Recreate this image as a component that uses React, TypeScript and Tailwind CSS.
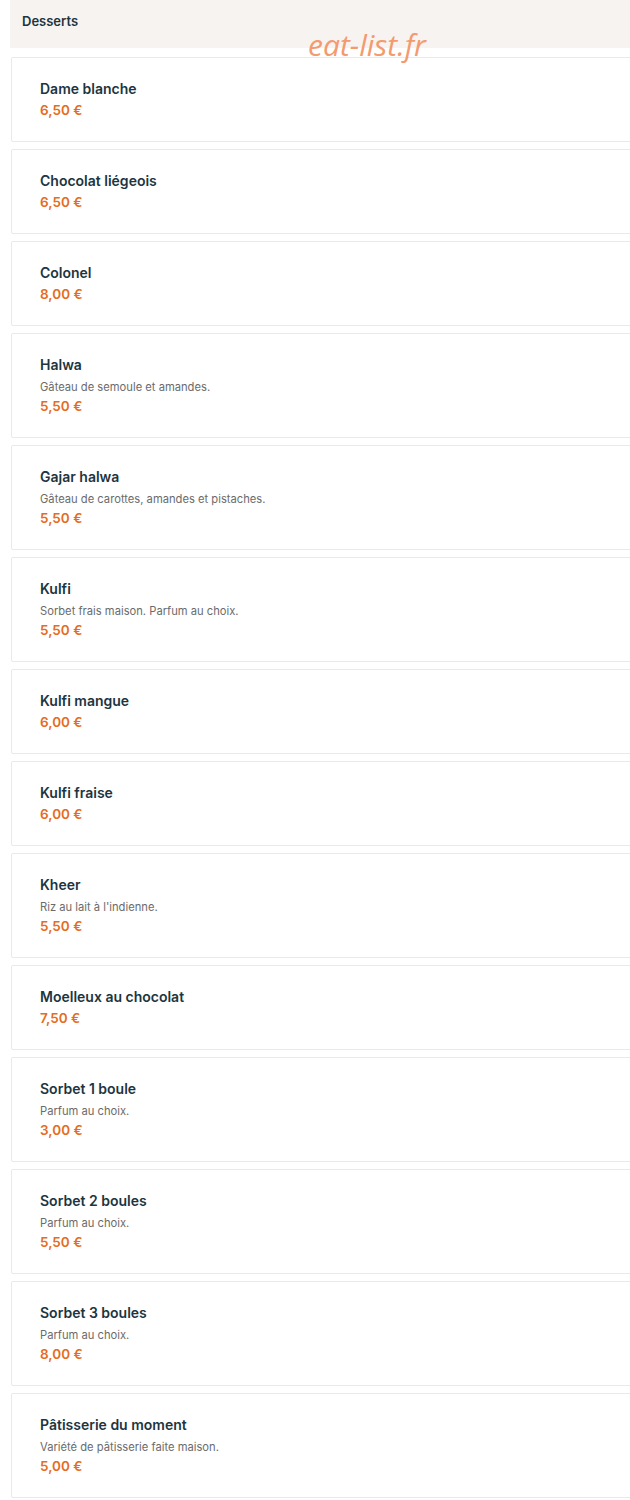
const items = [
  { name: "Dame blanche", price: "6,50 €" },
  { name: "Chocolat liégeois", price: "6,50 €" },
  { name: "Colonel", price: "8,00 €" },
  { name: "Halwa", desc: "Gâteau de semoule et amandes.", price: "5,50 €" },
  { name: "Gajar halwa", desc: "Gâteau de carottes, amandes et pistaches.", price: "5,50 €" },
  { name: "Kulfi", desc: "Sorbet frais maison. Parfum au choix.", price: "5,50 €" },
  { name: "Kulfi mangue", price: "6,00 €" },
  { name: "Kulfi fraise", price: "6,00 €" },
  { name: "Kheer", desc: "Riz au lait à l'indienne.", price: "5,50 €" },
  { name: "Moelleux au chocolat", price: "7,50 €" },
  { name: "Sorbet 1 boule", desc: "Parfum au choix.", price: "3,00 €" },
  { name: "Sorbet 2 boules", desc: "Parfum au choix.", price: "5,50 €" },
  { name: "Sorbet 3 boules", desc: "Parfum au choix.", price: "8,00 €" },
  { name: "Pâtisserie du moment", desc: "Variété de pâtisserie faite maison.", price: "5,00 €" },
]

export default function App() {
  return (
    <div className="relative w-[630px] overflow-hidden bg-white font-['Inter',sans-serif] pb-[3px]">
      {/* watermark */}
      <div className="absolute left-[308px] top-[30px] text-[30px] italic text-[#f39a6e] font-['Open_Sans',sans-serif] leading-none">
        eat-list.fr
      </div>

      {/* section header */}
      <div className="ml-[10px] h-[48px] bg-[#f7f3f0] pl-[12px] flex items-center">
        <h2 className="text-[13px] font-semibold text-[#1d3540] -mt-[4px]">Desserts</h2>
      </div>

      <div className="flex flex-col gap-[7px] pl-[11px] pt-[9px]">
        {items.map((item) => (
          <div
            key={item.name}
            className={`w-[640px] rounded-[2px] border border-[#e9e9e9] bg-white pl-[28px] ${item.desc ? "h-[105px]" : "h-[85px]"} pt-[21px]`}
          >
            <p className="text-[14px] font-semibold text-[#1d3540] leading-[20px]">{item.name}</p>
            {item.desc && (
              <p className="text-[11.2px] text-[#6b6b6b] leading-[16px] mt-[4px]">{item.desc}</p>
            )}
            <p className="text-[13.5px] font-semibold text-[#e56c20] leading-[20px] mt-[1px]">{item.price}</p>
          </div>
        ))}
      </div>
    </div>
  )
}
